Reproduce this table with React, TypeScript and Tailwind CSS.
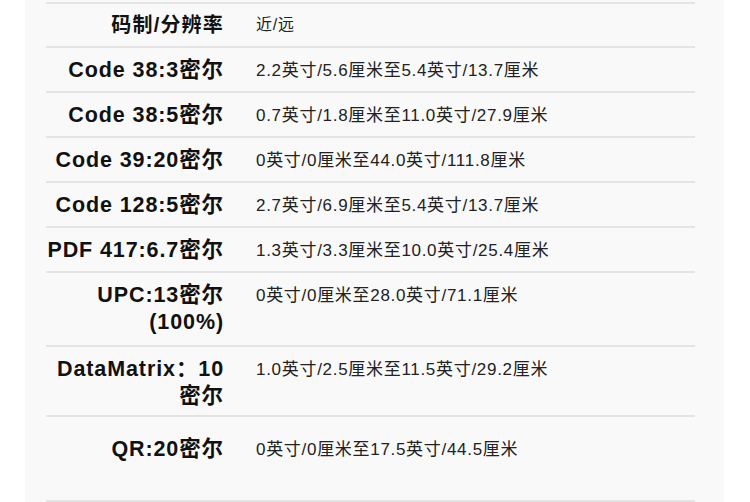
import React from "react";

type Row = { label: React.ReactNode; value: string; h: string; pt?: string };

const rows: Row[] = [
  { label: "Code 38:3密尔", value: "2.2英寸/5.6厘米至5.4英寸/13.7厘米", h: "h-[45px]" },
  { label: "Code 38:5密尔", value: "0.7英寸/1.8厘米至11.0英寸/27.9厘米", h: "h-[45px]" },
  { label: "Code 39:20密尔", value: "0英寸/0厘米至44.0英寸/111.8厘米", h: "h-[45px]" },
  { label: "Code 128:5密尔", value: "2.7英寸/6.9厘米至5.4英寸/13.7厘米", h: "h-[45px]" },
  { label: "PDF 417:6.7密尔", value: "1.3英寸/3.3厘米至10.0英寸/25.4厘米", h: "h-[45px]" },
  {
    label: (
      <>
        <span className="block">UPC:13密尔</span>
        <span className="block">(100%)</span>
      </>
    ),
    value: "0英寸/0厘米至28.0英寸/71.1厘米",
    h: "h-[74px]",
  },
  {
    label: (
      <>
        <span className="block">DataMatrix：10</span>
        <span className="block">密尔</span>
      </>
    ),
    value: "1.0英寸/2.5厘米至11.5英寸/29.2厘米",
    h: "h-[70px]",
  },
  { label: "QR:20密尔", value: "0英寸/0厘米至17.5英寸/44.5厘米", h: "h-[85px]", pt: "pt-[10px]" },
];

export default function App() {
  return (
    <div
      className="w-[750px] h-[502px] bg-white overflow-hidden"
      style={{ fontFamily: '"Liberation Sans", "Noto Sans CJK SC", sans-serif' }}
    >
      <div className="ml-[25px] w-[699px] h-[502px] bg-[#f9f9f9] pl-[21px] pr-[29px] pt-[2px]">
        <div className="border-t-2 border-[#e4e4e4]">
          <div className="flex items-center h-[44px] border-b-2 border-[#e4e4e4]">
            <div className="w-[178px] shrink-0 text-right text-[20px] font-bold text-[#111] tracking-[1.2px] -mr-[1px]">码制/分辨率</div>
            <div className="pl-[33px] text-[16px] text-[#222] tracking-[0.8px]">近/远</div>
          </div>
          {rows.map((r, i) => (
            <div key={i} className={`flex items-start ${r.h} border-b-2 border-[#e4e4e4] pt-[9px]`}>
              <div className={`w-[178px] shrink-0 text-right text-[21.5px] leading-[27px] font-bold text-[#111] tracking-[0.9px] -mr-[1px] ${r.pt ?? ""}`}>
                {r.label}
              </div>
              <div className={`pl-[33px] text-[17px] leading-[27px] text-[#222] tracking-[0.7px] whitespace-nowrap ${r.pt ?? ""}`}>
                {r.value}
              </div>
            </div>
          ))}
        </div>
      </div>
    </div>
  );
}
